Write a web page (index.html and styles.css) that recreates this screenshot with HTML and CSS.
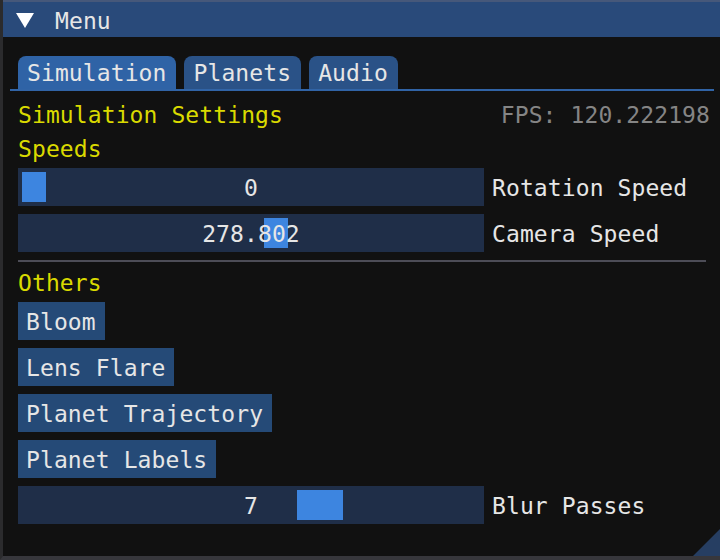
FILE: index.html
```html
<!DOCTYPE html>
<html>
<head>
<meta charset="utf-8">
<link rel="stylesheet" href="styles.css">
</head>
<body>
<div class="window">
  <div class="titlebar">
    <svg class="collapse" width="18" height="15" viewBox="0 0 18 15"><polygon points="0,0 18,0 9,15" fill="#ffffff"/></svg>
    <span class="title">Menu</span>
  </div>
  <div class="tabbar">
    <div class="tab active">Simulation</div>
    <div class="tab">Planets</div>
    <div class="tab">Audio</div>
  </div>
  <div class="content">
    <div class="textrow split">
      <span class="yellow">Simulation Settings</span>
      <span class="fps">FPS: 120.222198</span>
    </div>
    <div class="textrow yellow">Speeds</div>
    <div class="widgetrow">
      <div class="slider"><div class="grab" style="left:4px;width:24px"></div><span class="value">0</span></div>
      <span class="label">Rotation Speed</span>
    </div>
    <div class="widgetrow">
      <div class="slider"><div class="grab" style="left:246px;width:24px"></div><span class="value">278.802</span></div>
      <span class="label">Camera Speed</span>
    </div>
    <div class="separator"></div>
    <div class="textrow yellow">Others</div>
    <div class="widgetrow"><div class="button">Bloom</div></div>
    <div class="widgetrow"><div class="button">Lens Flare</div></div>
    <div class="widgetrow"><div class="button">Planet Trajectory</div></div>
    <div class="widgetrow"><div class="button">Planet Labels</div></div>
    <div class="widgetrow">
      <div class="slider"><div class="grab" style="left:279px;width:46px"></div><span class="value">7</span></div>
      <span class="label">Blur Passes</span>
    </div>
  </div>
  <div class="grip"></div>
</div>
</body>
</html>
```

FILE: styles.css
```css
html, body {
  margin: 0;
  padding: 0;
  background: #2a2a2a;
}
body {
  width: 720px;
  height: 560px;
  overflow: hidden;
  font-family: "DejaVu Sans Mono", monospace;
  font-size: 23px;
  line-height: 26px;
  letter-spacing: 0.1px;
  color: #e6e6e6;
}
.window {
  position: relative;
  box-sizing: border-box;
  width: 720px;
  height: 560px;
  border-left: 3px solid #2b2b2d;
  border-bottom: 4px solid #37373c;
  background: #111111;
}
.titlebar {
  height: 35px;
  border-top: 2px solid #46587a;
  background: #294a7a;
  display: flex;
  align-items: center;
  padding-left: 13px;
}
.collapse {
  display: block;
  margin-top: 2px;
}
.title {
  margin-left: 21px;
  padding-top: 3px;
}
.tabbar {
  display: flex;
  gap: 8px;
  margin: 19px 6px 0 7px;
  padding-left: 8px;
  border-bottom: 2px solid #3164a6;
}
.tab {
  height: 33px;
  padding: 1px 10px 0 9px;
  display: flex;
  align-items: center;
  box-sizing: border-box;
  background: #2a5287;
  border-radius: 8px 8px 0 0;
}
.tab.active {
  background: #2f63a6;
}
.content {
  display: flex;
  flex-direction: column;
  gap: 8px;
  padding: 9px 14px 0 15px;
}
.textrow {
  height: 26px;
  padding-top: 2px;
  box-sizing: border-box;
}
.split {
  display: flex;
  justify-content: space-between;
}
.yellow {
  color: #dada00;
}
.fps {
  color: #858585;
  margin-right: -4px;
}
.widgetrow {
  display: flex;
  align-items: center;
  height: 38px;
}
.slider {
  position: relative;
  width: 466px;
  height: 38px;
  background: #1f2e48;
  display: flex;
  align-items: center;
  justify-content: center;
}
.grab {
  position: absolute;
  top: 4px;
  height: 30px;
  background: #3d85e0;
}
.value {
  position: relative;
  padding-top: 2px;
}
.label {
  margin-left: 8px;
  padding-top: 2px;
}
.button {
  height: 38px;
  display: flex;
  align-items: center;
  padding: 2px 9px 0 8px;
  box-sizing: border-box;
  background: #254a77;
}
.separator {
  height: 2px;
  background: #4d4d57;
  margin-bottom: -2px;
}
.grip {
  position: absolute;
  right: 0;
  bottom: 0;
  width: 27px;
  height: 27px;
  background: #263e62;
  clip-path: polygon(100% 0, 100% 100%, 0 100%);
}
```
